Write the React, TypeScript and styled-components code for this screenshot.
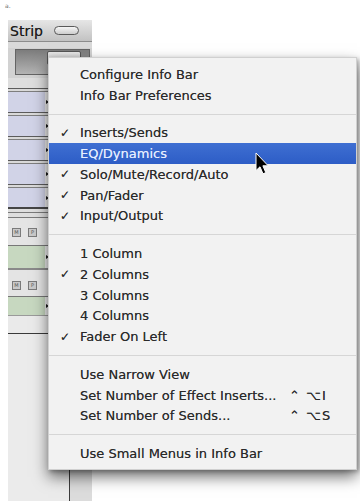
import React from "react";
import styled, { createGlobalStyle } from "styled-components";

const Global = createGlobalStyle`
  html, body { margin: 0; padding: 0; background: #ffffff; }
  body { font-family: "DejaVu Sans", "Liberation Sans", sans-serif; }
`;

const Page = styled.div`
  position: relative;
  width: 360px;
  height: 501px;
  overflow: hidden;
  background: #ffffff;
`;

const Mark = styled.div`
  height: 20px;
  padding-left: 5px;
  font-size: 6px;
  line-height: 11px;
  color: #666;
  box-sizing: border-box;
`;

const Window = styled.div`
  margin-left: 8px;
  width: 84px;
  height: 481px;
  display: flex;
  flex-direction: column;
  background: #e8e8e8;
`;

const TitleBar = styled.div`
  flex: 0 0 22px;
  box-sizing: border-box;
  display: flex;
  align-items: center;
  gap: 11px;
  padding-left: 2px;
  background: linear-gradient(#e6e6e6, #c2c2c2);
  border-bottom: 1px solid #8c8c8c;
  font-size: 14px;
  color: #1c1c1c;
  text-shadow: 0 0 0.5px rgba(0, 0, 0, 0.6);
  white-space: nowrap;
`;

const Pill = styled.span`
  display: inline-block;
  width: 25px;
  height: 9px;
  box-sizing: border-box;
  border: 1.5px solid #5a5a5a;
  border-radius: 5px;
  background: linear-gradient(#f6f6f6, #cdcdcd);
`;

const Band = styled.div<{ $h: number; $bg: string }>`
  flex: 0 0 ${(p) => p.$h}px;
  background: ${(p) => p.$bg};
`;

const Toolbar = styled.div`
  flex: 0 0 30px;
  display: flex;
  align-items: flex-start;
  padding: 1px 2px 0 7px;
  box-sizing: border-box;
  background: #d2d2d2;
`;

const DarkBox = styled.div`
  flex: 1;
  height: 26px;
  box-sizing: border-box;
  border: 1px solid #646464;
  background: linear-gradient(#7c7c7c, #b4b4b4);
  display: flex;
  justify-content: flex-end;
  padding: 1px 8px 0 0;
`;

const ToolButton = styled.div`
  width: 32px;
  height: 12px;
  border: 1px solid #555;
  border-radius: 2px;
  background: linear-gradient(#e8e8e8, #bdbdbd);
`;

const Rule = styled.div`
  flex: 0 0 4px;
  box-sizing: border-box;
  border-top: 1px solid #5c5c5c;
  border-bottom: 1px solid #7e7e7e;
  background: #d9d9d9;
`;

const Line = styled.div<{ $h?: number; $c?: string }>`
  flex: 0 0 ${(p) => p.$h ?? 1}px;
  background: ${(p) => p.$c ?? "#777"};
`;

const TripleRule = styled.div`
  flex: 0 0 11px;
  background: linear-gradient(
    #454545 0, #454545 2px,
    #dedede 2px, #dedede 5px,
    #7a7a7a 5px, #7a7a7a 6px,
    #dedede 6px, #dedede 10px,
    #7a7a7a 10px, #7a7a7a 11px
  );
`;

const FieldRow = styled.div<{ $h: number }>`
  flex: 0 0 ${(p) => p.$h}px;
  display: flex;
  align-items: center;
  background: #ececec;
`;

const Field = styled.div<{ $tone: "lav" | "green" }>`
  align-self: stretch;
  flex: 0 0 37px;
  background: ${(p) => (p.$tone === "lav" ? "#d1d3e7" : "#c7d8c0")};
`;

const Arrow = styled.span`
  width: 0;
  height: 0;
  margin-left: 1px;
  border-top: 2px solid transparent;
  border-bottom: 2px solid transparent;
  border-left: 3px solid #1a1a1a;
`;

const MPRow = styled.div<{ $h: number; $top: number }>`
  flex: 0 0 ${(p) => p.$h}px;
  box-sizing: border-box;
  display: flex;
  gap: 7px;
  padding: ${(p) => p.$top}px 0 0 4px;
  background: #e4e4e4;
`;

const MPButton = styled.span`
  width: 9px;
  height: 9px;
  box-sizing: border-box;
  border: 1px solid #7a7a7a;
  background: #c9c9c9;
  font-size: 5px;
  line-height: 7px;
  text-align: center;
  color: #555;
`;

const Lower = styled.div`
  flex: 1;
  display: flex;
`;

const LowerLeft = styled.div`
  flex: 0 0 61px;
  background: #ebebeb;
  border-right: 1px solid #3c3c3c;
`;

const LowerRight = styled.div`
  flex: 1;
  background: #dcdcdc;
`;

const Menu = styled.div`
  position: absolute;
  left: 48px;
  top: 57px;
  width: 309px;
  height: 413px;
  box-sizing: border-box;
  padding: 6px 0 5px;
  background: #f2f2f2;
  border: 1px solid #d0d0d0;
  box-shadow: 0 7px 14px rgba(0, 0, 0, 0.55), 2px 2px 4px rgba(0, 0, 0, 0.25);
  font-family: "DejaVu Sans", "Liberation Sans", sans-serif;
  font-size: 13px;
`;

const Item = styled.div<{ $hi?: boolean }>`
  height: 20.75px;
  display: grid;
  grid-template-columns: 31px 1fr 67px;
  align-items: center;
  color: ${(p) => (p.$hi ? "#e6eeff" : "#2a2a2a")};
  background: ${(p) => (p.$hi ? "linear-gradient(#3f6fd2, #2d5dc6)" : "transparent")};
  text-shadow: 0 0 0.5px ${(p) => (p.$hi ? "rgba(230,238,255,0.7)" : "rgba(0,0,0,0.55)")};
  white-space: nowrap;
`;

const Check = styled.span`
  padding-left: 11px;
  font-size: 12px;
  font-weight: bold;
`;

const Shortcut = styled.span`
  letter-spacing: 1px;
`;

const Separator = styled.div`
  height: 17px;
  display: flex;
  align-items: center;
  &::after {
    content: "";
    flex: 1;
    height: 1px;
    background: #d6d6d6;
  }
`;

const Cursor = styled.svg`
  position: absolute;
  left: 255px;
  top: 152px;
`;

type Entry =
  | { kind: "sep" }
  | { kind: "item"; label: string; checked?: boolean; hi?: boolean; key?: string };

const entries: Entry[] = [
  { kind: "item", label: "Configure Info Bar" },
  { kind: "item", label: "Info Bar Preferences" },
  { kind: "sep" },
  { kind: "item", label: "Inserts/Sends", checked: true },
  { kind: "item", label: "EQ/Dynamics", hi: true },
  { kind: "item", label: "Solo/Mute/Record/Auto", checked: true },
  { kind: "item", label: "Pan/Fader", checked: true },
  { kind: "item", label: "Input/Output", checked: true },
  { kind: "sep" },
  { kind: "item", label: "1 Column" },
  { kind: "item", label: "2 Columns", checked: true },
  { kind: "item", label: "3 Columns" },
  { kind: "item", label: "4 Columns" },
  { kind: "item", label: "Fader On Left", checked: true },
  { kind: "sep" },
  { kind: "item", label: "Use Narrow View" },
  { kind: "item", label: "Set Number of Effect Inserts...", key: "⌃ ⌥I" },
  { kind: "item", label: "Set Number of Sends...", key: "⌃ ⌥S" },
  { kind: "sep" },
  { kind: "item", label: "Use Small Menus in Info Bar" },
];

const LavField = ({ h }: { h: number }) => (
  <FieldRow $h={h}>
    <Field $tone="lav" />
    <Arrow />
  </FieldRow>
);

const GreenField = ({ h }: { h: number }) => (
  <FieldRow $h={h}>
    <Field $tone="green" />
    <Arrow />
  </FieldRow>
);

const MP = ({ h, top }: { h: number; top: number }) => (
  <MPRow $h={h} $top={top}>
    <MPButton>M</MPButton>
    <MPButton>P</MPButton>
  </MPRow>
);

export default function App() {
  return (
    <>
      <Global />
      <Page>
        <Mark>a.</Mark>
        <Window>
          <TitleBar>
            <span>Strip</span>
            <Pill />
          </TitleBar>
          <Band $h={6} $bg="#d9d9d9" />
          <Toolbar>
            <DarkBox>
              <ToolButton />
            </DarkBox>
          </Toolbar>
          <Band $h={10} $bg="#dedede" />
          <Rule />
          <LavField h={20} />
          <Rule />
          <LavField h={20} />
          <Rule />
          <LavField h={20} />
          <Rule />
          <LavField h={20} />
          <Rule />
          <LavField h={19} />
          <TripleRule />
          <MP h={27} top={10} />
          <Line />
          <GreenField h={22} />
          <Line $h={2} $c="#8a8a8a" />
          <MP h={26} top={11} />
          <Line />
          <GreenField h={18} />
          <Line $c="#9a9a9a" />
          <Band $h={17} $bg="#eaeaea" />
          <Line $c="#3a3a3a" />
          <Lower>
            <LowerLeft />
            <LowerRight />
          </Lower>
        </Window>

        <Menu>
          {entries.map((e, i) =>
            e.kind === "sep" ? (
              <Separator key={i} />
            ) : (
              <Item key={i} $hi={e.hi}>
                <Check>{e.checked ? "✓" : ""}</Check>
                <span>{e.label}</span>
                <Shortcut>{e.key ?? ""}</Shortcut>
              </Item>
            )
          )}
        </Menu>

        <Cursor width="15" height="24" viewBox="0 0 15 24">
          <path
            d="M1 1 L1 18.5 L5 14.8 L8 21.8 L10.8 20.6 L7.9 13.8 L13.2 13.8 Z"
            fill="#000"
            stroke="#fff"
            strokeWidth="1"
            strokeLinejoin="round"
          />
        </Cursor>
      </Page>
    </>
  );
}
